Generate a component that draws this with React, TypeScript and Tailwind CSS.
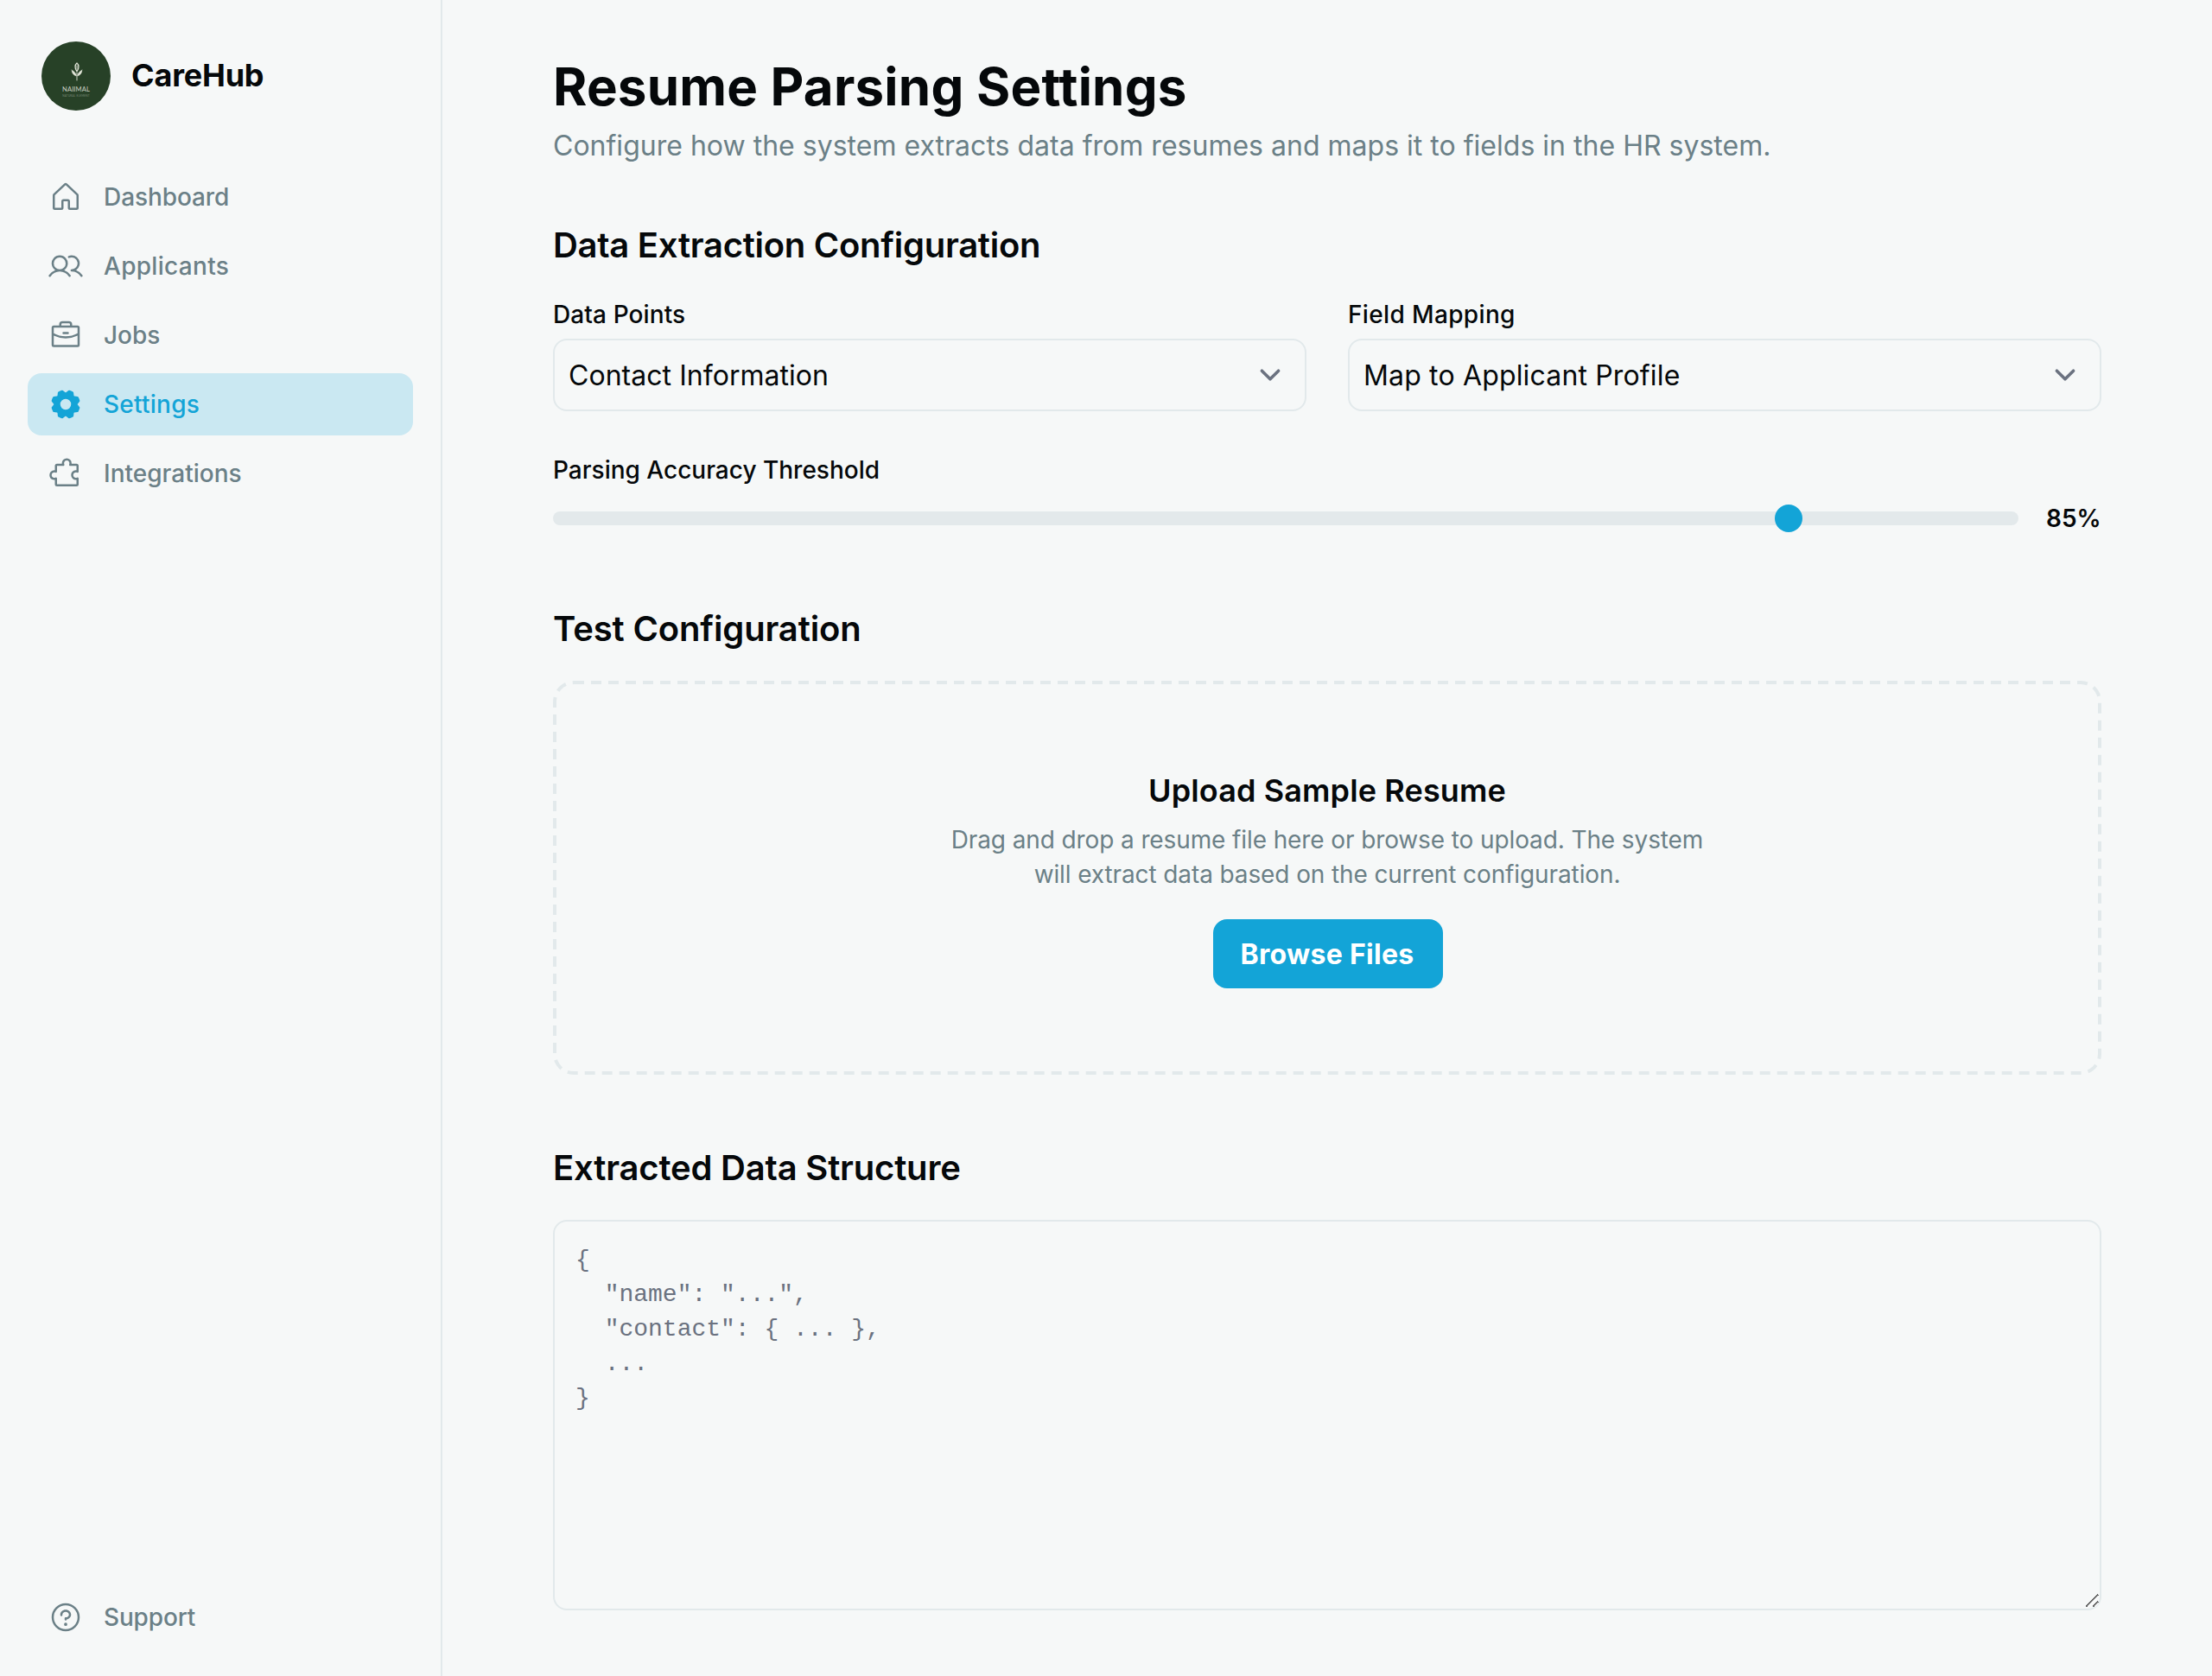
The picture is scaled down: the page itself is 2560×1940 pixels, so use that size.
import type { ComponentType } from "react";
import { PiBriefcase, PiGearFill, PiPuzzlePiece, PiQuestion, PiUsers } from "react-icons/pi";

type IconProps = { className?: string };

function HouseIcon({ className }: IconProps) {
  return (
    <svg viewBox="0 0 256 256" fill="currentColor" className={className}>
      <path d="M218.83,103.77l-80-75.48a1.14,1.14,0,0,1-.11-.11,16,16,0,0,0-21.53,0l-.11.11L37.17,103.77A16,16,0,0,0,32,115.55V208a16,16,0,0,0,16,16H96a16,16,0,0,0,16-16V160h32v48a16,16,0,0,0,16,16h48a16,16,0,0,0,16-16V115.55A16,16,0,0,0,218.83,103.77ZM208,208H160V160a16,16,0,0,0-16-16H112a16,16,0,0,0-16,16v48H48V115.55l.11-.1L128,40l79.9,75.43.11.1Z" />
    </svg>
  );
}

function Logo() {
  return (
    <div className="flex size-10 shrink-0 flex-col items-center rounded-full bg-[#274127] pt-[11.5px]">
      <svg viewBox="0 0 14 22" className="h-[11px] w-[7px] shrink-0" fill="none" stroke="#dfe3d6" strokeLinecap="round">
        <path d="M7 1C4.600 3 4.200 7 7 10.500 9.800 7 9.400 3 7 1Z" strokeWidth="1.300" />
        <path d="M7 4V8" strokeWidth=".8" />
        <path
          d="M1 9C1 13 3.500 15.500 6.500 16 6.200 13 4 10.500 1 9ZM13 9C13 13 10.500 15.500 7.500 16 7.800 13 10 10.500 13 9Z"
          fill="#dfe3d6"
          strokeWidth=".3"
        />
        <path d="M7 12V21" strokeWidth=".9" />
      </svg>
      <div className="mt-[2px] font-['Lato'] text-[3.8px] leading-[5px] tracking-[0.05px] text-[#c9d0c4]">NAIIMAL</div>
      <div className="mt-[1.5px] font-['Lato'] text-[1.5px] leading-[2px] tracking-[0.12px] whitespace-nowrap text-[#7f907d]">
        NATURAL ELEMENT
      </div>
    </div>
  );
}

type NavItemProps = {
  icon: ComponentType<IconProps>;
  label: string;
  tracking?: string;
  active?: boolean;
};

function NavItem({ icon: Icon, label, tracking = "", active = false }: NavItemProps) {
  return (
    <a
      className={
        active
          ? "flex items-center gap-3 rounded-lg bg-[#cae8f2] px-3 py-2 text-[#13a4d7]"
          : "flex items-center gap-3 rounded-lg px-3 py-2 text-[#6b8087]"
      }
    >
      <Icon className="size-5 shrink-0" />
      <span className={`text-sm font-medium ${tracking}`}>{label}</span>
    </a>
  );
}

function Heading({ tracking, children }: { tracking: string; children: string }) {
  return <h2 className={`text-xl font-semibold ${tracking}`}>{children}</h2>;
}

type SelectFieldProps = {
  label: string;
  value: string;
  labelTracking: string;
  valueTracking: string;
};

function SelectField({ label, value, labelTracking, valueTracking }: SelectFieldProps) {
  return (
    <div className="flex flex-1 flex-col gap-1">
      <label className={`text-sm font-medium ${labelTracking}`}>{label}</label>
      <div className="flex items-center justify-between rounded-lg border border-[#e2e9eb] p-2 text-base">
        <span className={valueTracking}>{value}</span>
        <svg viewBox="0 0 20 20" fill="none" className="size-6">
          <path d="M6 8l4 4 4-4" stroke="#6b7280" strokeWidth="1.5" strokeLinecap="round" strokeLinejoin="round" />
        </svg>
      </div>
    </div>
  );
}

function AccuracySlider({ value }: { value: number }) {
  return (
    <div className="flex items-center gap-4">
      <div className="flex h-2 flex-1 items-center rounded-full bg-[#e3e9eb] px-2">
        <div className="relative w-full">
          <div
            className="absolute size-4 -translate-x-1/2 -translate-y-1/2 rounded-full bg-[#13a4d7]"
            style={{ left: `${value}%` }}
          />
        </div>
      </div>
      <span className="w-8 text-sm font-semibold whitespace-nowrap">{value}%</span>
    </div>
  );
}

const template = `{
  "name": "...",
  "contact": { ... },
  ...
}`;

export default function App() {
  return (
    <div className="h-[1940px] w-[2560px] overflow-hidden bg-[#f6f8f8]">
      <div className="flex h-[970px] w-[1280px] origin-top-left scale-200 font-['Inter',sans-serif] text-[#05080a]">
        <aside className="flex w-64 shrink-0 flex-col border-r border-[#e2e9eb] p-4">
          <div className="flex items-center gap-3 p-2">
            <Logo />
            <span className="text-lg font-bold tracking-[-0.1px]">CareHub</span>
          </div>
          <nav className="mt-6 flex flex-col gap-1">
            <NavItem icon={HouseIcon} label="Dashboard" tracking="tracking-[-0.04px]" />
            <NavItem icon={PiUsers} label="Applicants" tracking="tracking-[0.15px]" />
            <NavItem icon={PiBriefcase} label="Jobs" />
            <NavItem icon={PiGearFill} label="Settings" tracking="tracking-[0.12px]" active />
            <NavItem icon={PiPuzzlePiece} label="Integrations" />
          </nav>
          <div className="mt-auto">
            <NavItem icon={PiQuestion} label="Support" tracking="tracking-[-0.08px]" />
          </div>
        </aside>

        <main className="flex flex-1 flex-col px-16 py-8">
          <header>
            <h1 className="text-3xl font-bold tracking-[0.105px]">Resume Parsing Settings</h1>
            <p className="mt-1 text-base tracking-[0.007px] text-[#6b8087]">
              Configure how the system extracts data from resumes and maps it to fields in the HR system.
            </p>
          </header>

          <section className="mt-8">
            <Heading tracking="tracking-[-0.138px]">Data Extraction Configuration</Heading>
            <div className="mt-4 flex gap-6">
              <SelectField
                label="Data Points"
                value="Contact Information"
                labelTracking="tracking-[0.05px]"
                valueTracking="tracking-[0.02px]"
              />
              <SelectField
                label="Field Mapping"
                value="Map to Applicant Profile"
                labelTracking="tracking-[0.18px]"
                valueTracking="tracking-[0.08px]"
              />
            </div>
            <div className="mt-6 flex flex-col gap-2">
              <label className="text-sm font-medium">Parsing Accuracy Threshold</label>
              <AccuracySlider value={85} />
            </div>
          </section>

          <section className="mt-10">
            <Heading tracking="tracking-[-0.07px]">Test Configuration</Heading>
            <div className="mt-4 flex flex-col items-center rounded-xl border-2 border-dashed border-[#e2e9eb] py-12 text-center">
              <h3 className="text-lg font-semibold tracking-[0.06px]">Upload Sample Resume</h3>
              <p className="mt-1 max-w-md text-sm tracking-[-0.055px] text-[#6b8087]">
                Drag and drop a resume file here or browse to upload. The system will extract data based on the current
                configuration.
              </p>
              <button className="mt-4 h-10 w-[133px] rounded-lg bg-[#13a4d7] text-base font-bold tracking-[0.15px] text-white">
                Browse Files
              </button>
            </div>
          </section>

          <section className="mt-10">
            <Heading tracking="tracking-[-0.095px]">Extracted Data Structure</Heading>
            <textarea
              rows={10}
              placeholder={template}
              className="mt-4 block h-[226px] w-full rounded-lg border border-[#e2e9eb] bg-transparent p-3 font-['Liberation_Mono',monospace] text-sm placeholder:text-[#6b7280]"
            />
          </section>
        </main>
      </div>
    </div>
  );
}
